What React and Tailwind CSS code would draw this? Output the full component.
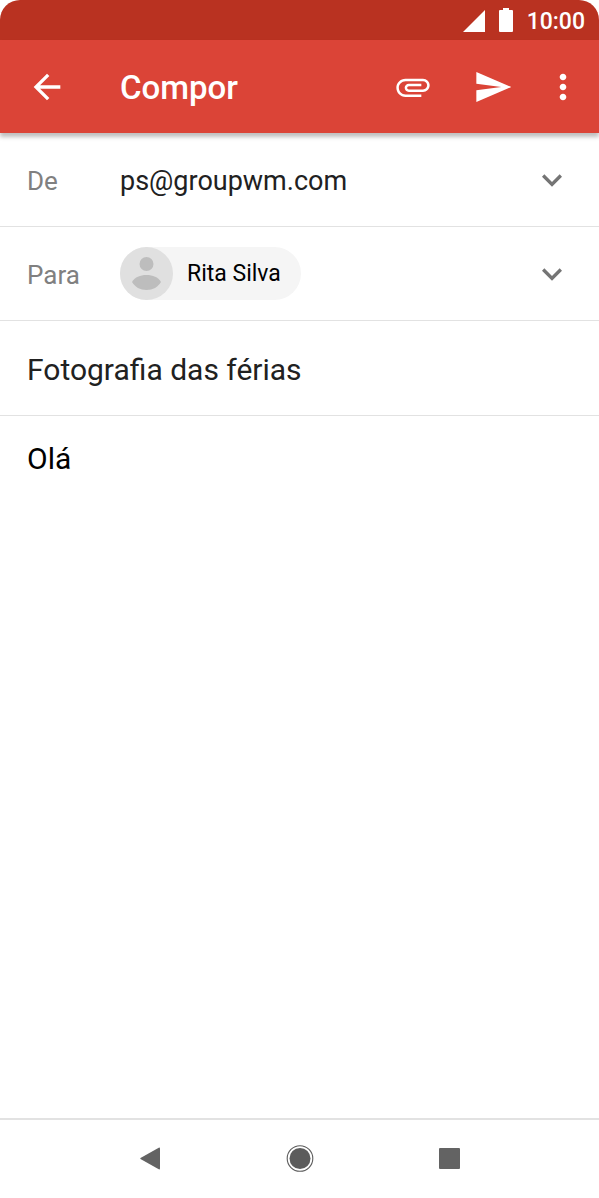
import { useState } from 'react'

const ICONS = {
  back:    'M20 11H7.83l5.59-5.59L12 4l-8 8 8 8 1.41-1.41L7.83 13H20v-2z',
  attach:  'M2 12.5C2 9.46 4.46 7 7.5 7H18c2.21 0 4 1.79 4 4s-1.79 4-4 4H9.5C8.12 15 7 13.88 7 12.5S8.12 10 9.5 10H17v1.5H9.5c-.55 0-1 .45-1 1s.45 1 1 1H18c1.38 0 2.5-1.12 2.5-2.5S19.38 8.5 18 8.5H7.5c-2.21 0-4 1.79-4 4s1.79 4 4 4H17V18H7.5C4.46 18 2 15.54 2 12.5z',
  send:    'M2.01 21L23 12 2.01 3 2 10l15 2-15 2z',
  more:    'M12 8c1.1 0 2-.9 2-2s-.9-2-2-2-2 .9-2 2 .9 2 2 2zm0 2c-1.1 0-2 .9-2 2s.9 2 2 2 2-.9 2-2-.9-2-2-2zm0 6c-1.1 0-2 .9-2 2s.9 2 2 2 2-.9 2-2-.9-2-2-2z',
  chevron: 'M16.59 8.59L12 13.17 7.41 8.59 6 10l6 6 6-6z',
}

function Icon({ name, className = '' }) {
  return (
    <svg viewBox="0 0 24 24" className={`size-10 shrink-0 fill-current ${className}`} aria-hidden="true">
      <path d={ICONS[name]} />
    </svg>
  )
}

function IconButton({ name, label, className = '' }) {
  return (
    <button type="button" aria-label={label} className={`shrink-0 ${className}`}>
      <Icon name={name} />
    </button>
  )
}

function StatusBar() {
  return (
    <div className="flex h-10 items-end justify-end bg-[#b93221] pr-3.5 pb-2 text-white">
      <svg viewBox="0 0 22 22" className="mr-3.5 size-[22px] fill-current" aria-hidden="true">
        <path d="M22 0v22H0z" />
      </svg>
      <svg viewBox="0 0 14 24" className="mr-3.5 h-6 w-3.5 fill-current" aria-hidden="true">
        <path d="M4 0h6v2h3a1 1 0 0 1 1 1v20a1 1 0 0 1-1 1H1a1 1 0 0 1-1-1V3a1 1 0 0 1 1-1h3z" />
      </svg>
      <span className="text-[23px] leading-5 font-medium">10:00</span>
    </div>
  )
}

function AppBar() {
  return (
    <header className="flex h-[93px] items-center bg-[#db4437] pr-4 pl-[27px] text-white shadow-[0_4px_4px_rgba(0,0,0,0.25)]">
      <IconButton name="back" label="Voltar" />
      <h1 className="ml-[53px] flex-1 pt-0.5 text-[33px] leading-10 font-medium">Compor</h1>
      <IconButton name="attach" label="Anexar" className="mr-10" />
      <IconButton name="send" label="Enviar" className="mr-[30px]" />
      <IconButton name="more" label="Mais opções" />
    </header>
  )
}

function Chip({ name }) {
  return (
    <div className="flex h-[53px] items-center rounded-full bg-[#f5f5f5] pr-5">
      <svg viewBox="0 0 53 53" className="size-[53px]" aria-hidden="true">
        <circle cx="26.5" cy="26.5" r="26.5" fill="#e0e0e0" />
        <circle cx="26.5" cy="17" r="7" fill="#bdbdbd" />
        <path d="M12 35C15 30 20 28 26.500 28S38 30 41 35C38 40 33 43 26.500 43S15 40 12 35z" fill="#bdbdbd" />
      </svg>
      <span className="ml-3.5 text-[23px] leading-8 text-black">{name}</span>
    </div>
  )
}

function NavBar() {
  return (
    <nav className="grid h-20 grid-cols-3 border-t-2 border-[#e2e2e2] px-[12.5%] text-[#636363]">
      <button type="button" aria-label="Anterior" className="flex items-center justify-center">
        <svg viewBox="0 0 28 28" className="size-7 fill-current" aria-hidden="true">
          <path d="M4.500 13.100 22.300 2.900Q24 2 24 3.800V23.200Q24 25 22.300 24.100L4.500 13.900Q4 13.500 4.500 13.100z" />
        </svg>
      </button>
      <button type="button" aria-label="Início" className="flex items-center justify-center">
        <svg viewBox="0 0 28 28" className="size-7" aria-hidden="true">
          <circle cx="14" cy="13.500" r="10.500" fill="#5c5c5c" />
          <circle cx="14" cy="13.500" r="12.800" fill="none" stroke="#5c5c5c" strokeWidth="1.100" />
        </svg>
      </button>
      <button type="button" aria-label="Recentes" className="flex items-center justify-center">
        <svg viewBox="0 0 28 28" className="size-7 fill-current" aria-hidden="true">
          <rect x="4" y="3" width="21" height="21" rx="1" />
        </svg>
      </button>
    </nav>
  )
}

export default function App() {
  const [subject, setSubject] = useState('Fotografia das férias')
  const [body, setBody] = useState('Olá')

  return (
    <div className="flex min-h-screen flex-col overflow-hidden rounded-t-[20px] bg-white font-[Roboto,sans-serif] text-[#212121]">
      <StatusBar />
      <AppBar />

      <form className="flex flex-1 flex-col">
        {/* From */}
        <div className="flex h-[94px] items-center border-b border-[#e2e2e2] px-[27px]">
          <label htmlFor="from" className="w-[93px] shrink-0 pt-0.5 text-[26px] leading-8 text-[#808080]">De</label>
          <select id="from" className="min-w-0 flex-1 appearance-none bg-transparent pt-0.5 text-[27px] leading-8 outline-none">
            <option>ps@groupwm.com</option>
          </select>
          <Icon name="chevron" className="pointer-events-none text-[#757575]" />
        </div>

        {/* To */}
        <div className="flex h-[94px] items-center border-b border-[#e2e2e2] px-[27px]">
          <span className="w-[93px] shrink-0 pt-0.5 text-[26px] leading-8 text-[#808080]">Para</span>
          <Chip name="Rita Silva" />
          <IconButton name="chevron" label="Mostrar Cc/Bcc" className="ml-auto text-[#757575]" />
        </div>

        <input
          type="text"
          aria-label="Assunto"
          value={subject}
          onChange={e => setSubject(e.target.value)}
          className="h-[95px] border-b border-[#e2e2e2] px-[27px] pt-0.5 text-[30px] outline-none"
        />
        <textarea
          aria-label="Mensagem"
          value={body}
          onChange={e => setBody(e.target.value)}
          className="flex-1 resize-none px-[27px] pt-6 text-[30px] leading-[38px] text-black outline-none"
        />
      </form>

      <NavBar />
    </div>
  )
}
